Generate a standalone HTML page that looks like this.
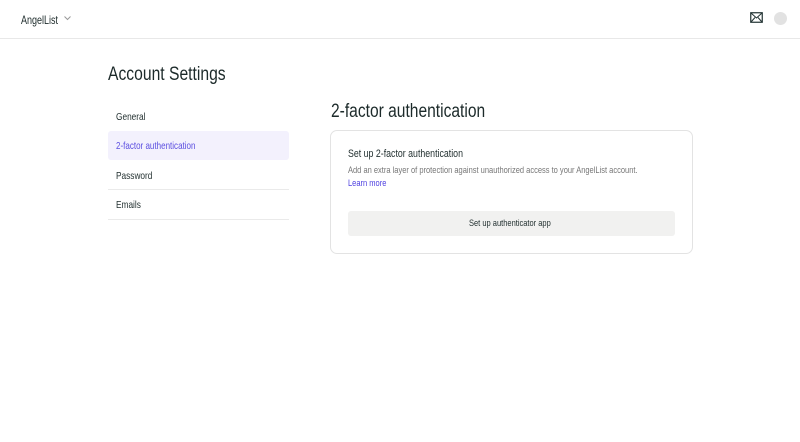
<!DOCTYPE html>
<html><head><style>
body{margin:0;width:800px;height:442px;background:#fff;font-family:"Liberation Sans",sans-serif;color:#1f2d2d;position:relative;overflow:hidden}
.a{position:absolute;white-space:nowrap}
.s{transform-origin:0 50%;transform:scaleX(0.79)}
.b{transform-origin:0 50%;transform:scaleX(0.82)}
</style></head><body>
<div class="a s" style="left:21px;top:13px;font-size:12px;color:#1c2a2a;transform:scaleX(0.75)">AngelList</div>
<svg class="a" style="left:64px;top:16px" width="7" height="5"><path d="M0.5 0.5L3.5 3.5L6.5 0.5" stroke="#999" fill="none"/></svg>
<svg class="a" style="left:750px;top:12px" width="13" height="11"><rect x="0.75" y="0.75" width="11.5" height="9.5" fill="none" stroke="#233" stroke-width="1.2"/><path d="M1 1L6.5 6L12 1M1 10L5 5.5M12 10L8 5.5" stroke="#233" fill="none" stroke-width="1"/></svg>
<div class="a" style="left:774px;top:12px;width:13px;height:13px;border-radius:50%;background:#e2e2e2"></div>
<div class="a" style="left:0;top:38px;width:800px;height:1px;background:#e8e8e8"></div>
<div class="a b" style="left:108px;top:64px;font-size:19px;color:#1c2a2a;transform:scaleX(0.825)">Account Settings</div>
<div class="a s" style="left:116px;top:111px;font-size:10.5px">General</div>
<div class="a" style="left:108px;top:131px;width:181px;height:29px;background:#f3f1fd;border-radius:3px"></div>
<div class="a s" style="left:116px;top:140px;font-size:10.5px;color:#5b4ee0;transform:scaleX(0.765)">2-factor authentication</div>
<div class="a s" style="left:116px;top:170px;font-size:10.5px">Password</div>
<div class="a" style="left:108px;top:189px;width:181px;height:1px;background:#eaeaea"></div>
<div class="a s" style="left:116px;top:199px;font-size:10.5px">Emails</div>
<div class="a" style="left:108px;top:219px;width:181px;height:1px;background:#eaeaea"></div>
<div class="a b" style="left:331px;top:101px;font-size:19px;color:#1c2a2a">2-factor authentication</div>
<div class="a" style="left:330px;top:130px;width:361px;height:122px;border:1px solid #e3e3e3;border-radius:7px"></div>
<div class="a s" style="left:348px;top:148px;font-size:11px;transform:scaleX(0.8)">Set up 2-factor authentication</div>
<div class="a s" style="left:348px;top:165px;font-size:9.5px;color:#777">Add an extra layer of protection against unauthorized access to your AngelList account.</div>
<div class="a s" style="left:348px;top:178px;font-size:9.5px;color:#4d3fe0">Learn more</div>
<div class="a" style="left:348px;top:211px;width:327px;height:25px;background:#f1f1f0;border-radius:3px"></div>
<div class="a s" style="left:469px;top:218px;font-size:9.5px">Set up authenticator app</div>
</body></html>
